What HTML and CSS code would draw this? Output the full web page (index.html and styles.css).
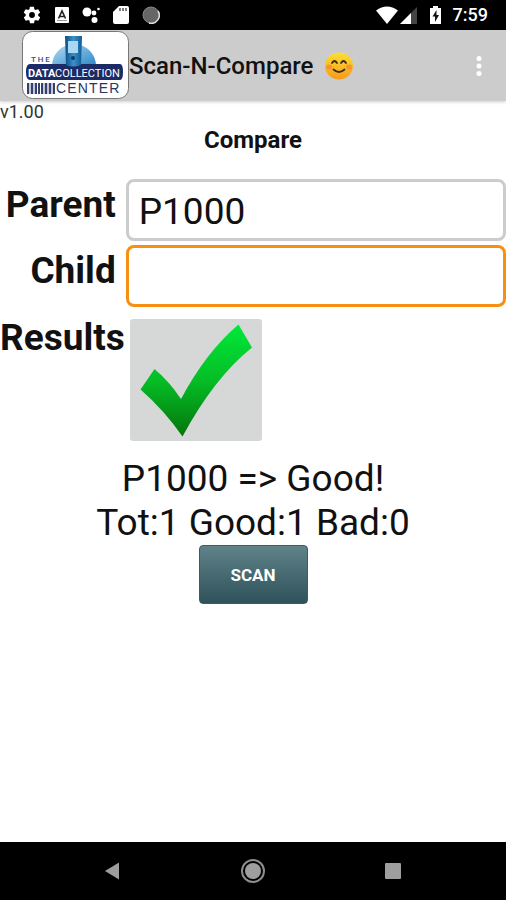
FILE: index.html
```html
<!DOCTYPE html>
<html lang="en">
<head>
  <meta charset="UTF-8" />
  <meta name="viewport" content="width=device-width, initial-scale=1.0" />
  <title>Scan-N-Compare</title>
  <link rel="stylesheet" href="styles.css">
</head>
<body>
  <div class="status-bar">
    <div class="status-left">
      <svg width="20" height="20" viewBox="0 0 24 24" fill="#fff"><path d="M19.4 13c.1-.3.1-.7.1-1s0-.7-.1-1l2.100-1.600c.2-.2.2-.4.1-.6l-2-3.500c-.1-.2-.4-.3-.6-.2l-2.500 1c-.5-.4-1.100-.7-1.700-1l-.4-2.600c0-.3-.2-.5-.5-.5h-4c-.2 0-.4.200-.5.400l-.4 2.700c-.6.200-1.100.600-1.700 1l-2.500-1c-.2-.1-.5 0-.6.200l-2 3.500c-.1.200-.1.500.1.600L4.500 11c0 .3-.1.700-.1 1s0 .7.100 1l-2.100 1.600c-.2.200-.2.400-.1.600l2 3.500c.1.200.4.300.6.200l2.500-1c.5.400 1.100.7 1.700 1l.4 2.600c0 .3.2.500.5.500h4c.2 0 .5-.2.500-.5l.4-2.600c.6-.2 1.200-.6 1.700-1l2.500 1c.2.100.5 0 .6-.2l2-3.500c.1-.2.1-.5-.1-.6zM12 15.500a3.500 3.500 0 1 1 0-7 3.500 3.500 0 0 1 0 7z"/></svg>
      <svg width="14" height="16" viewBox="0 0 14 16"><rect width="14" height="16" rx="1" fill="#fff"/><path d="M3.500 11.500L7 4l3.500 7.500M5 9.500h4" fill="none" stroke="#222" stroke-width="1.600"/><path d="M2 13.500h10" stroke="#999"/></svg>
      <svg width="18" height="18" viewBox="0 0 18 18" fill="#fff"><circle cx="5" cy="6" r="4.500"/><circle cx="12" cy="7" r="2.400"/><circle cx="12.500" cy="14" r="3"/><circle cx="16.500" cy="3" r="1.300"/></svg>
      <svg width="16" height="18" viewBox="0 0 16 18"><path d="M6 0h8q2 0 2 2v14q0 2-2 2H2q-2 0-2-2V6z" fill="#fff"/><path d="M7 2v3M10 2v3M13 2v3" stroke="#555" stroke-width="1.500"/></svg>
      <svg width="18" height="18" viewBox="0 0 18 18"><circle cx="9" cy="9" r="8" fill="#666" stroke="#888"/><path d="M16 5a8 8 0 0 1-9 12" fill="none" stroke="#ddd" stroke-width="1.500"/></svg>
    </div>
    <div class="status-right">
      <svg width="22" height="18" viewBox="0 0 22 18"><path d="M0 4.500Q11-3.500 22 4.500L11 18z" fill="#fff"/></svg>
      <svg width="18" height="18" viewBox="0 0 18 18"><path d="M0 18L17 1v17z" fill="#444"/><path d="M0 18L11 7v11z" fill="#fff"/></svg>
      <svg class="battery" width="11" height="18" viewBox="0 0 11 18"><path d="M3 0h5v2h3v16H0V2h3z" fill="#fff"/><path d="M6.500 4L2.500 10.500H5V16l4-7H6.500z" fill="#111"/></svg>
      <span class="clock">7:59</span>
    </div>
  </div>

  <header class="app-bar">
    <svg class="logo" width="107" height="69" viewBox="0 0 107 69" role="img" aria-label="The Data Collection Center">
      <defs>
        <linearGradient id="globe" x1="0" y1="0" x2="1" y2="1">
          <stop offset="0" stop-color="#b5def5"/>
          <stop offset="1" stop-color="#2d86c5"/>
        </linearGradient>
        <linearGradient id="scanner" x1="0" y1="0" x2="1" y2="0">
          <stop offset="0" stop-color="#0d4c84"/>
          <stop offset="0.5" stop-color="#3a91c8"/>
          <stop offset="1" stop-color="#0f5a96"/>
        </linearGradient>
      </defs>
      <rect x="0.500" y="0.500" width="106" height="67" rx="10" fill="#fff" stroke="#777"/>
      <path d="M30 35a22 22 0 0 1 44 0z" fill="url(#globe)"/>
      <path d="M8 33h90q3 0 3 8t-3 8H8q-4 0-4-8t4-8z" fill="#1c2b66"/>
      <path d="M43 5h17l-1 29q-8 3-15 0z" fill="url(#scanner)"/>
      <rect x="46" y="10" width="10" height="12" fill="#a9d8f2"/>
      <circle cx="51" cy="27" r="2" fill="#0b3b70"/>
      <text class="logo-the" x="9" y="31">T H E</text>
      <text class="logo-data" x="6" y="46">DATA</text>
      <text class="logo-collection" x="33" y="46">COLLECTION</text>
      <path d="M6 52v11M10 52v11M14 52v11M17 52v11M20 52v11M24 52v11M28 52v11M32 52v11" stroke="#34406e" stroke-width="2"/>
      <path d="M8 52v11M12 52v11M22 52v11M26 52v11M30 52v11" stroke="#8790ad" stroke-width="1"/>
      <text class="logo-center" x="34" y="62">C&#8202;E&#8202;N&#8202;T&#8202;E&#8202;R</text>
    </svg>
    <h1 class="app-title">Scan-N-Compare</h1>
    <svg class="smiley" width="30" height="28" viewBox="0 0 30 28" role="img" aria-label="Smiling face">
      <defs>
        <linearGradient id="face" x1="0" y1="0" x2="0" y2="1">
          <stop offset="0" stop-color="#fde030"/>
          <stop offset="1" stop-color="#f59a1c"/>
        </linearGradient>
      </defs>
      <ellipse cx="15" cy="14" rx="14" ry="13.500" fill="url(#face)"/>
      <ellipse cx="5" cy="15" rx="3" ry="2.500" fill="#f47c38" opacity="0.600"/>
      <ellipse cx="25" cy="15" rx="3" ry="2.500" fill="#f47c38" opacity="0.600"/>
      <path d="M8 11q2.500-4 5 0M17 11q2.500-4 5 0M9.500 17.500q5.500 5 11 0" fill="none" stroke="#402a20" stroke-width="1.800" stroke-linecap="round"/>
    </svg>
    <button class="menu-btn" type="button" aria-label="More options">
      <svg width="6" height="20" viewBox="0 0 6 20" fill="#fff"><circle cx="3" cy="2.500" r="2.500"/><circle cx="3" cy="10" r="2.500"/><circle cx="3" cy="17.500" r="2.500"/></svg>
    </button>
  </header>

  <main class="content">
    <div class="version">v1.00</div>
    <h2 class="page-title">Compare</h2>

    <form class="compare-form">
      <label class="field-label" for="parent">Parent</label>
      <input class="field" id="parent" type="text" value="P1000">
      <label class="field-label" for="child">Child</label>
      <input class="field field-active" id="child" type="text">
      <label class="field-label" for="result">Results</label>
      <button class="result" id="result" type="button" aria-label="Good">
        <svg width="132" height="122" viewBox="0 0 132 122">
          <defs>
            <linearGradient id="tick" x1="0" y1="0" x2="0" y2="1">
              <stop offset="0" stop-color="#00e83a"/>
              <stop offset="0.500" stop-color="#05bd25"/>
              <stop offset="1" stop-color="#04750c"/>
            </linearGradient>
          </defs>
          <path d="M24.500 50Q39 62 51 80Q76 33 108.500 5.500L122 28.500Q84 59 52.500 117.500Q34 91 10.500 70.500z" fill="url(#tick)"/>
        </svg>
      </button>
    </form>

    <div class="message">P1000 =&gt; Good!</div>
    <div class="message">Tot:1 Good:1 Bad:0</div>
    <button class="scan-btn" type="button">SCAN</button>
  </main>

  <nav class="nav-bar">
    <button class="nav-btn" type="button" aria-label="Back">
      <svg width="24" height="24" viewBox="0 0 24 24"><path d="M4 12L18 3.500v17z" fill="#9e9e9e"/></svg>
    </button>
    <button class="nav-btn" type="button" aria-label="Home">
      <svg width="24" height="24" viewBox="0 0 24 24"><circle cx="12" cy="12" r="11" fill="none" stroke="#8c8c8c" stroke-width="2"/><circle cx="12" cy="12" r="8" fill="#9e9e9e"/></svg>
    </button>
    <button class="nav-btn" type="button" aria-label="Recent apps">
      <svg width="24" height="24" viewBox="0 0 24 24"><rect x="4" y="4" width="16" height="16" rx="1" fill="#9e9e9e"/></svg>
    </button>
  </nav>
</body>
</html>
```

FILE: styles.css
```css
* {
  box-sizing: border-box;
}
body {
  margin: 0;
  min-height: 100vh;
  display: flex;
  flex-direction: column;
  font-family: Roboto, sans-serif;
  background: #fff;
  color: #111;
}
svg {
  display: block;
}
button {
  border: none;
  padding: 0;
  background: none;
  font-family: inherit;
  cursor: pointer;
}
.status-bar {
  display: flex;
  justify-content: space-between;
  align-items: center;
  height: 30px;
  padding: 0 18px 0 22px;
  background: #000;
}
.status-left {
  display: flex;
  align-items: center;
  gap: 13px;
}
.status-right {
  display: flex;
  align-items: center;
  gap: 2px;
}
.battery {
  margin: 0 10px;
}
.clock {
  color: #fff;
  font-size: 18px;
  font-weight: 500;
  line-height: 30px;
}
.app-bar {
  display: flex;
  align-items: center;
  height: 71px;
  padding: 0 24px 0 22px;
  background: #ccc;
  box-shadow: 0 1px 3px rgba(0, 0, 0, 0.2);
}
.app-title {
  margin: 0;
  font-size: 24px;
  font-weight: 500;
}
.smiley {
  margin-left: 11px;
}
.menu-btn {
  margin-left: auto;
}
.logo-the {
  font-size: 8px;
  font-weight: 500;
  fill: #444c77;
}
.logo-data {
  font-size: 11px;
  font-weight: 700;
  fill: #fff;
}
.logo-collection {
  font-size: 11px;
  fill: #fff;
}
.logo-center {
  font-family: "Liberation Sans", sans-serif;
  font-size: 14px;
  fill: #2a3565;
}
.content {
  flex: 1;
  display: flex;
  flex-direction: column;
  align-items: center;
}
.version {
  align-self: flex-start;
  font-size: 18px;
  line-height: 22px;
  color: #333;
}
.page-title {
  margin: 0;
  font-size: 24px;
  line-height: 34px;
}
.compare-form {
  display: grid;
  grid-template-columns: auto 1fr;
  column-gap: 1px;
  row-gap: 4px;
  width: 100%;
  margin-top: 22px;
}
.field-label {
  padding-right: 9px;
  font-size: 37px;
  font-weight: 700;
  line-height: 52px;
  text-align: right;
}
.field-label:last-of-type {
  padding: 1px 0 0;
}
.field {
  width: 100%;
  min-width: 0;
  height: 62px;
  padding: 2px 10px 0;
  border: 3px solid #ccc;
  border-radius: 8px;
  background: #fff;
  color: #111;
  font-family: inherit;
  font-size: 37px;
  outline: none;
}
.field-active {
  border-color: #f78f12;
}
.result {
  justify-self: start;
  margin: 8px 0 0 4px;
  border-radius: 3px;
  background: #d6d8d7;
}
.message {
  font-size: 37px;
  line-height: 44px;
}
.compare-form + .message {
  margin-top: 16px;
}
.scan-btn {
  width: 109px;
  height: 59px;
  border: 1px solid #3b5c62;
  border-radius: 4px;
  background: linear-gradient(#5f8389, #2f525a);
  color: #fff;
  font-size: 17px;
  font-weight: 700;
}
.nav-bar {
  display: flex;
  justify-content: center;
  align-items: center;
  gap: 116px;
  height: 58px;
  background: #000;
}
```
